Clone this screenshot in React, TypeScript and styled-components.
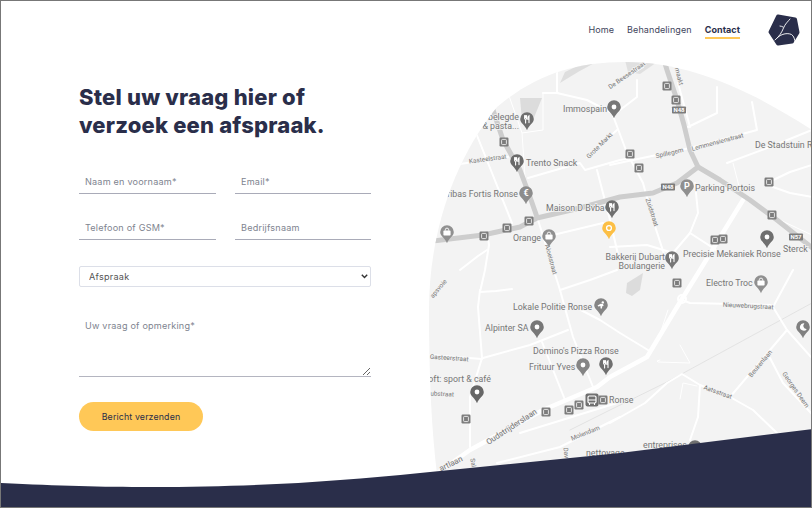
import React from "react";
import styled, { createGlobalStyle } from "styled-components";

const Global = createGlobalStyle`
  html, body { margin: 0; padding: 0; background: #fff; }
  * { box-sizing: border-box; }
`;

const FONT = `Inter, "Noto Sans", "Liberation Sans", sans-serif`;
const NAVY = "#2a2e4a";
const CHEVRON =
  "data:image/svg+xml;utf8,<svg xmlns='http://www.w3.org/2000/svg' width='7' height='5' viewBox='0 0 7 5'><path d='M.8 .8L3.5 3.6L6.2 .8' fill='none' stroke='%23333' stroke-width='1.4'/></svg>";

const Page = styled.div`
  position: relative;
  width: 812px;
  height: 508px;
  border: 1px solid #777;
  background: #fff;
  overflow: hidden;
  font-family: ${FONT};
  display: flex;
  flex-direction: column;
`;

const Header = styled.header`
  flex: none;
  height: 59px;
  display: flex;
  justify-content: flex-end;
  align-items: flex-start;
  padding: 13px 11px 0 0;
`;

const Nav = styled.nav`
  display: flex;
  gap: 13px;
  margin: 9px 28px 0 0;
`;

const NavLink = styled.a<{ $active?: boolean }>`
  font-size: 9px;
  line-height: 13px;
  height: 16px;
  letter-spacing: ${(p) => (p.$active ? "0.05px" : "0.1px")};
  color: ${(p) => (p.$active ? NAVY : "#41445c")};
  font-weight: ${(p) => (p.$active ? 700 : 400)};
  border-bottom: ${(p) => (p.$active ? "2px solid #ffc857" : "none")};
`;

const Body = styled.main`
  flex: 1;
  display: flex;
  justify-content: space-between;
  min-height: 0;
`;

const FormColumn = styled.section`
  width: 370px;
  padding: 23px 0 0 78px;
`;

const Title = styled.h1`
  margin: 0 0 31px;
  font-size: 22px;
  line-height: 28px;
  font-weight: 800;
  letter-spacing: 0.2px;
  color: ${NAVY};
`;

const Form = styled.form`
  display: grid;
  grid-template-columns: 137px 136px;
  column-gap: 19px;
`;

const Field = styled.input`
  height: 24px;
  width: 100%;
  margin-bottom: 22px;
  padding: 0 0 0 6px;
  border: 0;
  border-bottom: 1px solid #a9abb8;
  outline: 0;
  background: transparent;
  font: 400 9.1px ${FONT};
  letter-spacing: 0.2px;
  &::placeholder { color: #80848f; opacity: 1; }
`;

const Choice = styled.select`
  grid-column: 1 / -1;
  appearance: none;
  height: 21px;
  width: 292px;
  margin: 4px 0 0;
  padding: 0 0 0 9px;
  border: 1px solid #dcdfe8;
  border-radius: 2px;
  background: #fff url("${CHEVRON}") no-repeat right 2px center;
  color: #555;
  font: 400 9.1px ${FONT};
  letter-spacing: 0.25px;
`;

const Message = styled.textarea`
  grid-column: 1 / -1;
  display: block;
  width: 292px;
  height: 76px;
  margin-top: 14px;
  padding: 19px 6px 0;
  border: 0;
  border-bottom: 1px solid #b4b5c0;
  outline: 0;
  background: transparent;
  font: 400 9.1px ${FONT};
  letter-spacing: 0.2px;
  &::placeholder { color: #80848f; opacity: 1; }
`;

const Send = styled.button`
  grid-column: 1 / -1;
  width: 124px;
  height: 29px;
  margin-top: 25px;
  border: 0;
  border-radius: 15px;
  background: #ffc857;
  color: ${NAVY};
  font: 400 8.8px ${FONT};
  letter-spacing: 0.15px;
`;

const MapFigure = styled.figure`
  margin: 0;
  width: 383px;
  height: 420px;
  flex: none;
  svg { display: block; }
`;

const Road = styled.polyline<{ $w: number; $c: string }>`
  fill: none;
  stroke: ${(p) => p.$c};
  stroke-width: ${(p) => p.$w}px;
  stroke-linejoin: round;
  stroke-linecap: round;
`;

const Label = styled.text<{ $size?: number }>`
  font-family: Roboto, "Liberation Sans", sans-serif;
  font-size: ${(p) => p.$size ?? 8.8}px;
  fill: #767676;
  stroke: #f3f3f3;
  stroke-width: 1.5px;
  paint-order: stroke;
`;

const PinGlyphText = styled.text`
  font-family: Roboto, "Liberation Sans", sans-serif;
  font-size: 9px;
  font-weight: 700;
  fill: #fff;
  text-anchor: middle;
`;

const BadgeText = styled.text`
  font-family: Roboto, "Liberation Sans", sans-serif;
  font-size: 6px;
  font-weight: 700;
  fill: #fff;
  text-anchor: middle;
`;

const Wave = styled.svg`
  position: absolute;
  left: -1px;
  top: -1px;
  pointer-events: none;
`;

type Pts = string;
const grayRoads: Pts[] = [
  "492,107 503,140 520,170 530,197 537,217",
  "425,242 483,235 520,227 537,218 580,208 620,197 653,193 677,183 698,167",
  "664,60 667,70 677,100 684,125 690,150 698,167 720,180 750,200 777,220 815,250",
];
const bigWhite: Pts[] = [
  "436,474 470,450 543,410 597,387 610,377 647,357 677,307 700,270 743,200",
];
const midWhite: Pts[] = [
  "557,70 557,93 587,100 612,113 627,153 643,183 653,220 665,257",
  "543,93 558,93",
  "453,165 508,157",
  "472,123 492,173 512,223",
  "528,178 580,163 585,170 620,160 632,158",
  "538,220 550,258 560,290 573,337 593,387",
  "480,292 485,270 489,245 488,238",
  "460,270 478,256 487,250",
  "480,290 478,307 482,358 470,397 470,447",
  "480,292 496,291 512,289",
  "483,358 530,345 568,330",
  "430,355 482,359",
  "542,342 565,400",
  "560,290 590,280 617,270",
  "577,308 600,320 620,333 648,350",
  "610,423 645,403 667,383 682,374 700,385 730,397 753,410 777,433",
  "700,385 698,417 690,440",
  "730,397 770,350 787,330 773,307 793,270",
  "787,330 812,358",
  "682,300 690,303 773,305",
  "770,358 783,383 812,414",
  "690,233 698,213 695,183",
  "610,247 647,245 673,253 690,233 727,257",
  "727,163 770,147 812,130",
  "610,165 633,160 690,148 757,130 752,102",
  "688,127 717,113 717,87",
  "678,83 690,127",
  "767,183 790,172 812,165",
  "773,187 790,193 812,197",
  "610,87 643,67",
  "637,80 637,97 620,110",
  "553,235 603,223",
  "597,170 610,220 620,263",
  "587,157 617,130",
  "520,433 617,403",
  "497,463 560,447 620,417",
];
const thinWhite: Pts[] = [
  "508,93 522,133 543,130 543,93",
  "522,133 525,177",
  "733,163 740,190",
  "780,220 812,235",
  "657,343 668,310",
  "660,360 657,361 658,362 690,363 680,345",
  "680,399 683,383 697,386",
];
const thinGray: Pts[] = ["812,303 667,382 610,410 570,430"];

const labels: { t: string; x: number; y: number; a?: string }[] = [
  { t: "Immospain", x: 563, y: 112 },
  { t: "- belegde", x: 519, y: 120, a: "end" },
  { t: "es & pasta...", x: 519, y: 129, a: "end" },
  { t: "Trento Snack", x: 526, y: 166 },
  { t: "aribas Fortis Ronse", x: 518, y: 197, a: "end" },
  { t: "Maison D Bvba", x: 546, y: 211 },
  { t: "Orange", x: 541, y: 241, a: "end" },
  { t: "Bakkerij Dubart", x: 665, y: 260, a: "end" },
  { t: "Boulangerie", x: 665, y: 269, a: "end" },
  { t: "Parking Portois", x: 695, y: 191 },
  { t: "De Stadstuin R", x: 755, y: 148 },
  { t: "Precisie Mekaniek Ronse", x: 683, y: 257 },
  { t: "Sterck", x: 783, y: 252 },
  { t: "Electro Troc", x: 706, y: 286 },
  { t: "Lokale Politie Ronse", x: 513, y: 310 },
  { t: "Alpinter SA", x: 485, y: 331 },
  { t: "Domino's Pizza Ronse", x: 533, y: 354 },
  { t: "Frituur Yves", x: 529, y: 370 },
  { t: "oft: sport & café", x: 491, y: 382, a: "end" },
  { t: "Ronse", x: 609, y: 403 },
  { t: "nettoyage", x: 586, y: 456 },
  { t: "entreprises", x: 643, y: 448 },
];

const streets: { t: string; x: number; y: number; r: number; s?: number }[] = [
  { t: "Kasteelstraat", x: 488, y: 161, r: -8 },
  { t: "Grote Markt", x: 601, y: 147, r: -45 },
  { t: "De Beesestraat", x: 628, y: 77, r: -35 },
  { t: "Spillegem", x: 670, y: 155, r: -13 },
  { t: "Lemmensienstraat", x: 718, y: 144, r: -15 },
  { t: "Zuidstraat", x: 650, y: 213, r: 72 },
  { t: "Aloeistraat", x: 549, y: 260, r: 75 },
  { t: "Oudstrijderslaan", x: 513, y: 429, r: -33, s: 8 },
  { t: "Molendam", x: 586, y: 435, r: -22 },
  { t: "Nieuwebrugstraat", x: 748, y: 308, r: 3 },
  { t: "Aatsstraat", x: 717, y: 394, r: 20 },
  { t: "Beukenlaan", x: 762, y: 365, r: -50 },
  { t: "Georges Deem", x: 794, y: 391, r: 55 },
  { t: "artlaan", x: 452, y: 466, r: -25, s: 8 },
  { t: "Gasteerstraat", x: 449, y: 360, r: 4 },
  { t: "ubstraat", x: 442, y: 396, r: 3 },
  { t: "apsvoie", x: 440, y: 290, r: -50 },
  { t: "Sal", x: 471, y: 463, r: 80 },
  { t: "Dav", x: 564, y: 453, r: 85 },
  { t: "maakt", x: 677, y: 77, r: 75 },
];

type Kind = "dot" | "ring" | "food" | "euro" | "shop" | "P" | "moon" | "police";
const pins: { x: number; y: number; k: Kind; c: string }[] = [
  { x: 614, y: 107, k: "dot", c: "#777" },
  { x: 527, y: 119, k: "food", c: "#6f6f6f" },
  { x: 517, y: 161, k: "food", c: "#6a6a6a" },
  { x: 526, y: 193, k: "euro", c: "#8c8c8c" },
  { x: 612, y: 207, k: "food", c: "#6f6f6f" },
  { x: 609, y: 228, k: "ring", c: "#fcbf45" },
  { x: 447, y: 232, k: "shop", c: "#909090" },
  { x: 549, y: 236, k: "shop", c: "#909090" },
  { x: 687, y: 186, k: "P", c: "#8f8f8f" },
  { x: 672, y: 258, k: "food", c: "#777" },
  { x: 767, y: 237, k: "dot", c: "#6f6f6f" },
  { x: 761, y: 282, k: "shop", c: "#909090" },
  { x: 601, y: 305, k: "police", c: "#858585" },
  { x: 537, y: 327, k: "dot", c: "#777" },
  { x: 583, y: 365, k: "dot", c: "#858585" },
  { x: 606, y: 364, k: "food", c: "#6f6f6f" },
  { x: 477, y: 392, k: "dot", c: "#666" },
  { x: 803, y: 327, k: "moon", c: "#808080" },
  { x: 695, y: 447, k: "dot", c: "#6f6f6f" },
];

const stops: [number, number][] = [
  [504, 142], [529, 221], [507, 228], [484, 236], [667, 86], [676, 100], [630, 154], [639, 168],
  [769, 182], [772, 215], [715, 240], [723, 239], [677, 283], [466, 419], [546, 412], [569, 410],
  [579, 405], [603, 400],
];

const shields: { t: string; x: number; y: number }[] = [
  { t: "N48", x: 679, y: 110 },
  { t: "N48", x: 668, y: 187 },
  { t: "N57", x: 796, y: 237 },
];

const PinGlyph = ({ k }: { k: Kind }) => {
  switch (k) {
    case "food":
      return (
        <g fill="none" stroke="#fff" strokeWidth="1.1" strokeLinecap="round">
          <path d="M-2.4 -3.4v2.6c0 .9.6 1.2 1 1.2v3.6M-1.4 -3.4v2M-.4 -3.4v2.6c0 .9-.5 1.2-1 1.2" />
          <path d="M2 3.6v-7c-1 .6-1.3 2-1.3 3.6h1.3" />
        </g>
      );
    case "euro":
      return <PinGlyphText y="3.2">€</PinGlyphText>;
    case "P":
      return <PinGlyphText y="3.2">P</PinGlyphText>;
    case "shop":
      return (
        <g>
          <rect x="-3.6" y="-1.4" width="7.2" height="5" rx="0.8" fill="#fff" />
          <path d="M-1.7 -1.4v-.8a1.7 1.7 0 0 1 3.4 0v.8" fill="none" stroke="#fff" strokeWidth="0.9" />
        </g>
      );
    case "moon":
      return <path d="M1.4 -3.6a3.7 3.7 0 1 0 2.4 5.6a3.2 3.2 0 0 1 -2.4 -5.6z" fill="#fff" />;
    case "police":
      return (
        <g fill="#fff">
          <circle cx="1.8" cy="-2.6" r="1.2" />
          <path d="M-3.4 .4l3-1.6 2.4.2.6 2-1.4.2-.2 2.4h-1.4l-.2-2.6-2.2.6z" />
        </g>
      );
    case "ring":
      return <circle r="2.4" fill="none" stroke="#fff" strokeWidth="1.4" />;
    default:
      return <circle r="2.4" fill="#fff" />;
  }
};

const MapDrawing = () => (
  <svg width="383" height="420" viewBox="428 60 383 420" role="img" aria-label="Kaart van Ronse">
    <defs>
      <clipPath id="mapShape">
        <path d="M438 482 C431 430 429 370 429 310 C429 240 450 165 497 107 C535 75 575 62 625 62 C690 62 750 90 812 130 L812 482 Z" />
      </clipPath>
    </defs>
    <g clipPath="url(#mapShape)">
      <rect x="428" y="60" width="384" height="422" fill="#f3f3f3" />
      <path d="M520 98H542L533 120H522Z" fill="#dcdcdc" />
      <path d="M560 83 L565 72 L590 60 L600 60 L578 72Z" fill="#dedede" />
      <path d="M625 60 L660 60 L640 74 L628 72Z" fill="#e0e0e0" />
      <path d="M627 283L643 273L640 290L632 296L626 293Z" fill="#dcdcdc" />
      {thinGray.map((p) => <Road key={p} points={p} $w={0.8} $c="#dedede" />)}
      {thinWhite.map((p) => <Road key={p} points={p} $w={1} $c="#fff" />)}
      {midWhite.map((p) => <Road key={p} points={p} $w={2} $c="#fff" />)}
      {bigWhite.map((p) => <Road key={p} points={p} $w={4.5} $c="#fff" />)}
      {grayRoads.map((p) => <Road key={p} points={p} $w={5} $c="#cdcdcd" />)}
      <circle cx="682" cy="299" r="4" fill="none" stroke="#fff" strokeWidth="2" />
      {streets.map((s) => (
        <Label
          key={s.t}
          $size={s.s ?? 6.4}
          textAnchor="middle"
          transform={`translate(${s.x} ${s.y}) rotate(${s.r})`}
        >
          {s.t}
        </Label>
      ))}
      {labels.map((l) => (
        <Label key={l.t} x={l.x} y={l.y} textAnchor={l.a ?? "start"}>
          {l.t}
        </Label>
      ))}
      {stops.map(([x, y]) => (
        <g key={`${x}-${y}`} transform={`translate(${x} ${y})`}>
          <rect x="-4.5" y="-4.5" width="9" height="9" rx="1.2" fill="#7c7c7c" />
          <rect x="-2.4" y="-2.6" width="4.8" height="5.2" rx="0.9" fill="none" stroke="#fff" strokeWidth="0.8" />
        </g>
      ))}
      <g transform="translate(592 400)">
        <rect x="-6.5" y="-6.5" width="13" height="13" rx="2" fill="#707070" />
        <rect x="-4" y="-4" width="8" height="7" rx="1.2" fill="none" stroke="#fff" strokeWidth="1.2" />
        <path d="M-4 0H4M-2.5 3V5M2.5 3V5" stroke="#fff" strokeWidth="1.1" />
      </g>
      {shields.map((s) => (
        <g key={`${s.x}`} transform={`translate(${s.x} ${s.y})`}>
          <rect x="-7" y="-3.5" width="14" height="7" rx="0.8" fill="#7d7d7d" />
          <BadgeText y="2.2">{s.t}</BadgeText>
        </g>
      ))}
      {pins.map((p) => (
        <g key={`${p.x}-${p.y}`} transform={`translate(${p.x} ${p.y})`}>
          <path
            d="M0 -6.8a6.8 6.8 0 0 1 6.8 6.8c0 4.2-4.6 5.6-6.8 11.2c-2.2-5.6-6.8-7-6.8-11.2a6.8 6.8 0 0 1 6.8-6.8z"
            fill={p.c}
          />
          <PinGlyph k={p.k} />
        </g>
      ))}
    </g>
  </svg>
);

const Logo = () => (
  <svg width="32" height="32" viewBox="0 0 32 32" aria-label="Logo">
    <path
      d="M10 2.5 L27 5.5 L29.5 18.5 L24 27.5 L10 29.5 L2.5 18 Z"
      fill={NAVY}
      stroke={NAVY}
      strokeWidth="4"
      strokeLinejoin="round"
    />
    <path
      d="M22 5 C20 7.5 17 10 15.5 14 C14 18 11 23 7 26 M15 13 C14 12.5 13 12 12 12 M9 24 C13 20 19 18.5 23.5 20.5 C26 22 27 26 27 28.5"
      fill="none"
      stroke="#fff"
      strokeWidth="0.9"
      strokeLinecap="round"
    />
  </svg>
);

export default function App() {
  return (
    <>
      <Global />
      <Page>
        <Header>
          <Nav>
            <NavLink>Home</NavLink>
            <NavLink>Behandelingen</NavLink>
            <NavLink $active>Contact</NavLink>
          </Nav>
          <Logo />
        </Header>
        <Body>
          <FormColumn>
            <Title>
              Stel uw vraag hier of
              <br />
              verzoek een afspraak.
            </Title>
            <Form>
              <Field placeholder="Naam en voornaam*" />
              <Field placeholder="Email*" />
              <Field placeholder="Telefoon of GSM*" />
              <Field placeholder="Bedrijfsnaam" />
              <Choice defaultValue="Afspraak">
                <option>Afspraak</option>
              </Choice>
              <Message placeholder="Uw vraag of opmerking*" />
              <Send type="button">Bericht verzenden</Send>
            </Form>
          </FormColumn>
          <MapFigure>
            <MapDrawing />
          </MapFigure>
        </Body>
        <Wave width="812" height="508" viewBox="0 0 812 508" aria-hidden="true">
          <path d="M0 483 C60 486 100 487 150 487 C260 487 340 481 420 473 L620 453 L812 429 V508 H0 Z" fill={NAVY} />
        </Wave>
      </Page>
    </>
  );
}
